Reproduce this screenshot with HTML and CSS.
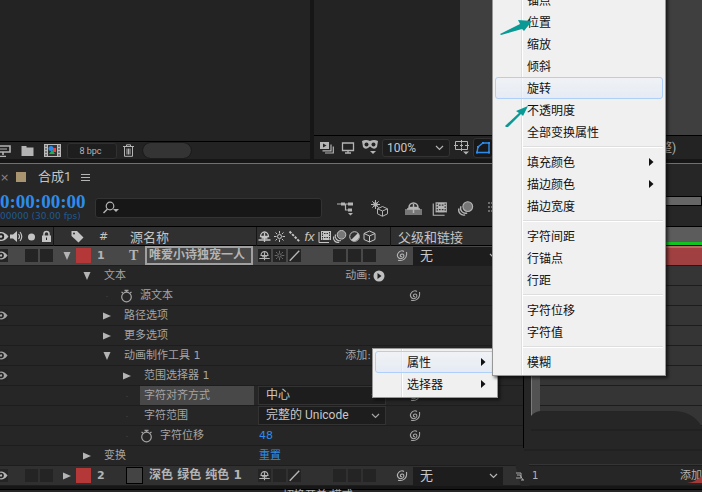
FILE: index.html
```html
<!DOCTYPE html>
<html lang="zh-CN">
	<head>
		<meta charset="UTF-8">
		<title>合成1</title>
		<link rel="stylesheet" href="styles.css">
	</head>
	<body>
		<!-- 图标 -->
		<svg class="defs" aria-hidden="true">
			<symbol id="eye" viewBox="0 0 15 15"><path d="M0 7.500Q3 3 7 3t7.500 4.500Q11 12 7 12T0 7.500Z" fill="currentColor"/><circle cx="7" cy="7.500" r="3.200" fill="#222"/><circle cx="7" cy="7.500" r="1.300" fill="currentColor"/></symbol>
			<symbol id="speaker" viewBox="0 0 15 15"><path d="M1 5.500h3l4-3.500v11L4 9.500H1z" fill="currentColor"/><path d="M9.500 5q2 2.500 0 5M11 3q3.500 4.500 0 9" fill="none" stroke="currentColor" stroke-width="1.200"/></symbol>
			<symbol id="dot" viewBox="0 0 15 15"><circle cx="7.500" cy="8" r="3.500" fill="currentColor"/></symbol>
			<symbol id="lock" viewBox="0 0 15 15"><path d="M3 6.500h9V13H3z" fill="currentColor"/><path d="M5 7V5a2.500 2.500 0 0 1 5 0v2" fill="none" stroke="currentColor" stroke-width="1.500"/><path d="M7 8.500h1v2.500h-1z" fill="#222"/></symbol>
			<symbol id="tag" viewBox="0 0 15 15"><path d="M1.500 2H7l6.500 6.500-5 5L1.500 7z" fill="currentColor"/><circle cx="4" cy="4.500" r="1" fill="#333"/></symbol>
			<symbol id="shy" viewBox="0 0 15 15"><path d="M3.500 7.500a4 4.500 0 0 1 8 0zM1.500 11h12M4.500 9h6M7.500 4v9" fill="none" stroke="currentColor" stroke-width="1.300"/></symbol>
			<symbol id="sun" viewBox="0 0 15 15"><circle cx="7.500" cy="7.500" r="2" fill="none" stroke="currentColor"/><path d="M7.500 2v2.500M7.500 10.500V13M2 7.500h2.500M10.500 7.500H13M3.500 3.500l1.700 1.700M9.800 9.800l1.700 1.700M11.500 3.500L9.800 5.200M5.200 9.800l-1.700 1.700" stroke="currentColor"/></symbol>
			<symbol id="dash" viewBox="0 0 15 15"><path d="M2.500 2.500l10 10" stroke="currentColor" stroke-width="2" stroke-dasharray="2.500 1.200"/></symbol>
			<symbol id="line" viewBox="0 0 15 15"><path d="M2 13.500L13 2" stroke="currentColor" stroke-width="1.600"/></symbol>
			<symbol id="film" viewBox="0 0 15 15"><path d="M4 2h10v9H4z" fill="currentColor"/><path d="M2 3v10.500H12" fill="none" stroke="currentColor"/><path d="M7 4.500h4M7 8.500h4M5.500 3v8M12.500 3v8" stroke="#333" stroke-dasharray="1.500 1"/></symbol>
			<symbol id="blur" viewBox="0 0 15 15"><circle cx="9.500" cy="5.800" r="4.300" fill="#777" stroke="currentColor"/><path d="M3.500 5.500a4.500 4.500 0 0 0 5.500 6M1.700 7.500a4.500 4.500 0 0 0 5.500 5.700" fill="none" stroke="currentColor" stroke-width="1.200"/></symbol>
			<symbol id="half" viewBox="0 0 15 15"><circle cx="7.500" cy="7.500" r="4.800" fill="none" stroke="currentColor"/><path d="M11 4a5 5 0 0 1-7 7z" fill="currentColor"/></symbol>
			<symbol id="cube" viewBox="0 0 15 15"><path d="M7.500 2l5.500 2.500v6L7.500 13 2 10.500v-6zM2 4.500L7.500 7 13 4.500M7.500 7v6" fill="none" stroke="currentColor"/></symbol>
			<symbol id="right" viewBox="0 0 12 12"><path d="M2 2.500L10 6l-8 3.500z" fill="currentColor"/></symbol>
			<symbol id="down" viewBox="0 0 12 12"><path d="M2.500 2h7L6 10z" fill="currentColor"/></symbol>
			<symbol id="none" viewBox="0 0 12 12"><path d="M5.500 6h1v1h-1z" fill="#444"/></symbol>
			<symbol id="watch" viewBox="0 0 13 14"><circle cx="6.500" cy="8" r="4.800" fill="none" stroke="currentColor" stroke-width="1.200"/><path d="M4.500 1.500h4M6.500 1.500V3M1.500 3l1.500 1M11.500 3L10 4" stroke="currentColor" stroke-width="1.300"/></symbol>
			<symbol id="spiral" viewBox="0 0 13 13"><path d="M7 7.500C5.500 8.500 4.500 6 6.300 5.200C9 4 10 8 7.300 9.300C4 10.800 1 7 3.200 4C4.800 1.700 7.500 1.500 9 2.500M3 11.200C8 12.700 12.500 9 11.500 3" fill="none" stroke="currentColor" stroke-width="1.100"/></symbol>
			<symbol id="chevron" viewBox="0 0 9 6"><path d="M1 1l3.500 3.500L8 1" fill="none" stroke="currentColor" stroke-width="1.200"/></symbol>
			<symbol id="play" viewBox="0 0 12 12"><circle cx="6" cy="6" r="5.500" fill="currentColor"/><path d="M4.500 3l4 3-4 3z" fill="#222"/></symbol>
			<symbol id="more" viewBox="0 0 5 8"><path d="M0 0l4.500 4L0 8z" fill="currentColor"/></symbol>
		</svg>

		<main class="app">
			<section class="panels">
				<div class="project">
					<div class="view"></div>
					<div class="bar">
						<svg class="interpret" viewBox="0 0 11 12"><path d="M0 1h10v6H0M0 11.500h6M3 7v3" fill="none" stroke="currentColor" stroke-width="1.600"/><path d="M0 4h7" stroke="currentColor"/></svg>
						<svg class="folder" viewBox="0 0 14 12"><path d="M1 1h5v1.500h7V11H1z" fill="currentColor"/></svg>
						<svg class="comp" viewBox="0 0 17 13"><path d="M0 0h17v13H0z" fill="#bbb"/><path d="M4 1h9v11H4z" fill="#333"/><path d="M2 1v12M15 1v12" stroke="#333" stroke-dasharray="2 1"/><circle cx="7" cy="4.500" r="2.500" fill="#2d8ceb"/><path d="M9 4h3v4H9z" fill="#f04040"/><path d="M5 10l3-4 3 4z" fill="#22b14c"/></svg>
						<button class="bpc" type="button">8 bpc</button>
						<svg class="trash" viewBox="0 0 11 13"><path d="M0 2.500h11M3.500 2V.8h4V2M1.500 3v9.300h8V3M4 4.500v6M5.500 4.500v6M7 4.500v6" fill="none" stroke="currentColor"/></svg>
						<span class="pill"></span>
					</div>
				</div>
				<div class="viewer">
					<div class="view"><div class="canvas"></div></div>
					<div class="bar">
						<svg class="w14" viewBox="0 0 14 12"><path d="M0 0h9v7H0z" fill="currentColor"/><path d="M3 1.500L6.500 3.500 3 5.500z" fill="#222"/><path d="M2.500 8.800h8.500V2.500M5 11h8.300V4.500" fill="none" stroke="currentColor" stroke-width="1.200"/></svg>
						<svg class="w14" viewBox="0 0 14 12"><path d="M1.500 1h11v7.500h-11zM4 11h6M7 9v2" fill="none" stroke="currentColor" stroke-width="1.300"/></svg>
						<svg class="mask" viewBox="0 0 16 15"><path d="M0 1q4-2 8 0 4-2 8 0l-1 6q-2 3-5 1L8 6.500 6 8Q3 10 1 7z" fill="currentColor"/><circle cx="4.500" cy="4.500" r="2" fill="#222"/><circle cx="11.500" cy="4.500" r="2" fill="#222"/><path d="M8 11h6l-3 3z" fill="currentColor"/></svg>
						<label class="pick zoom">
							<select aria-label="缩放"><option>100%</option></select>
							<svg class="chev"><use href="#chevron"/></svg>
						</label>
						<svg class="mask" viewBox="0 0 16 15"><path d="M1.500 1.500h12v8h-12zM7.500 0v3.500M7.500 7.500V11M0 5.500h4M11 5.500h4M6 5.500h3M7.500 4v3" fill="none" stroke="currentColor"/><path d="M9 11.500h6l-3 3z" fill="currentColor"/></svg>
						<span class="shape"><svg class="w14" viewBox="0 0 14 12"><path d="M1 10.500l1-5.500L7 1h6v9.500z" fill="none" stroke="#2d8ceb" stroke-width="1.400"/><path d="M0 9.500h2v2H0zM1 4h2v2H1zM6 0h2v2H6zM12 0h2v2h-2zM12 9.500h2v2h-2z" fill="#2d8ceb"/></svg></span>
						<span class="quality">(完整)</span>
					</div>
				</div>
			</section>

			<section class="timeline">
				<div class="layers">
					<div class="tabs">
						<button class="close" type="button" aria-label="关闭">×</button>
						<i class="swatch"></i>
						<span class="tab">合成1</span>
						<svg class="burger" viewBox="0 0 9 9"><path d="M0 1.500h9M0 4.500h9M0 7.500h9" stroke="currentColor"/></svg>
					</div>
					<div class="tools">
						<div class="time">
							<strong>0:00:00:00</strong>
							<small>00000 (30.00 fps)</small>
						</div>
						<label class="search">
							<svg viewBox="0 0 18 14"><circle cx="8" cy="5" r="3.800" fill="none" stroke="currentColor" stroke-width="1.200"/><path d="M5.500 8L1.500 12" stroke="currentColor" stroke-width="1.500"/><path d="M11 8h6l-3 3z" fill="currentColor"/></svg>
							<input type="text" aria-label="搜索">
						</label>
						<div class="toggles">
							<svg viewBox="0 0 17 17"><path d="M0 4h5M6 4h8M8.500 4v6h4" fill="none" stroke="currentColor" stroke-width="1.200"/><path d="M4 2.500h4v3H4zM11 2.500h5v3h-5zM11 8.500h4v3h-4zM11 13h5l-2.500 2.500z" fill="currentColor"/></svg>
							<svg viewBox="0 0 17 17"><path d="M4.500 0v9M0 4.500h9M1.300 1.300l6.400 6.400M7.700 1.300L1.300 7.700" stroke="currentColor"/><circle cx="4.500" cy="4.500" r="2.300" fill="currentColor"/><path d="M11.500 6.500l5 2.300v5l-5 2.500-5-2.500v-5zM6.500 8.800l5 2.200 5-2.200M11.500 11v5" fill="#232323" stroke="currentColor"/></svg>
							<svg viewBox="0 0 17 17"><path d="M0 9h17v6H0z" fill="#777"/><path d="M4 7.500a4.500 4.500 0 0 1 9 0zM2 9h13M8.500 4v9" fill="none" stroke="currentColor" stroke-width="1.500"/></svg>
							<svg viewBox="0 0 15 15"><use href="#film"/></svg>
							<svg viewBox="0 0 15 15"><use href="#blur"/></svg>
							<svg viewBox="0 0 17 17"><path d="M5 3h9M5 7h9M5 11h9" stroke="currentColor" stroke-dasharray="2 1"/></svg>
						</div>
					</div>
					<div class="row head">
						<div class="av"><svg><use href="#eye"/></svg><svg><use href="#speaker"/></svg><svg><use href="#dot"/></svg><svg><use href="#lock"/></svg></div>
						<div class="name"><svg class="tagicon"><use href="#tag"/></svg><b>#</b><span>源名称</span></div>
						<div class="sw"><svg><use href="#shy"/></svg><svg><use href="#sun"/></svg><svg><use href="#dash"/></svg><em>fx</em><svg><use href="#film"/></svg><svg><use href="#blur"/></svg><svg><use href="#half"/></svg><svg><use href="#cube"/></svg></div>
						<div class="parent">父级和链接</div>
					</div>
					<div class="row layer on">
						<div class="av"><i><svg><use href="#eye"/></svg></i><i class="off"></i><i></i><i></i></div>
						<div class="name"><svg class="tri"><use href="#down"/></svg><i class="color"></i><b>1</b><span class="type">T</span><span class="title">唯爱小诗独宠一人</span></div>
						<div class="sw"><i><svg><use href="#shy"/></svg></i><i><svg class="dim"><use href="#sun"/></svg></i><i><svg><use href="#line"/></svg></i><i class="off"></i><i class="off"></i><i></i><i></i><i></i></div>
						<div class="parent"><svg class="spiral"><use href="#spiral"/></svg><label class="pick"><select aria-label="父级"><option>无</option></select><svg class="chev"><use href="#chevron"/></svg></label></div>
					</div>
					<div class="row prop">
						<div class="av"></div>
						<div class="name l1"><svg class="twirl"><use href="#down"/></svg><span>文本</span></div>
						<div class="sw add">动画:<svg><use href="#play"/></svg></div>
					</div>
					<div class="row prop">
						<div class="av"></div>
						<div class="name l2"><svg class="twirl"><use href="#none"/></svg><svg class="watch"><use href="#watch"/></svg><span>源文本</span></div>
						<div class="sw"></div>
						<div class="parent"><svg class="spiral"><use href="#spiral"/></svg></div>
					</div>
					<div class="row prop">
						<div class="av"><i><svg><use href="#eye"/></svg></i></div>
						<div class="name l2"><svg class="twirl"><use href="#right"/></svg><span>路径选项</span></div>
					</div>
					<div class="row prop">
						<div class="av"></div>
						<div class="name l2"><svg class="twirl"><use href="#right"/></svg><span>更多选项</span></div>
					</div>
					<div class="row prop">
						<div class="av"><i><svg><use href="#eye"/></svg></i></div>
						<div class="name l2"><svg class="twirl"><use href="#down"/></svg><span>动画制作工具 1</span></div>
						<div class="sw add">添加:<svg><use href="#play"/></svg></div>
					</div>
					<div class="row prop">
						<div class="av"><i><svg><use href="#eye"/></svg></i></div>
						<div class="name l3"><svg class="twirl"><use href="#right"/></svg><span>范围选择器 1</span></div>
					</div>
					<div class="row prop">
						<div class="av"></div>
						<div class="name l3"><svg class="twirl"><use href="#none"/></svg><label class="picked" for="align">字符对齐方式</label></div>
						<div class="sw"><span class="pick wide"><select id="align"><option>中心</option></select><svg class="chev"><use href="#chevron"/></svg></span></div>
						<div class="parent"><svg class="spiral"><use href="#spiral"/></svg></div>
					</div>
					<div class="row prop">
						<div class="av"></div>
						<div class="name l3"><svg class="twirl"><use href="#none"/></svg><label for="range">字符范围</label></div>
						<div class="sw"><span class="pick wide"><select id="range"><option>完整的 Unicode</option></select><svg class="chev"><use href="#chevron"/></svg></span></div>
						<div class="parent"><svg class="spiral"><use href="#spiral"/></svg></div>
					</div>
					<div class="row prop">
						<div class="av"></div>
						<div class="name l3"><svg class="twirl"><use href="#none"/></svg><svg class="watch"><use href="#watch"/></svg><span>字符位移</span></div>
						<div class="sw"><a href="#">48</a></div>
						<div class="parent"><svg class="spiral"><use href="#spiral"/></svg></div>
					</div>
					<div class="row prop">
						<div class="av"></div>
						<div class="name l1"><svg class="twirl"><use href="#right"/></svg><span>变换</span></div>
						<div class="sw"><a href="#">重置</a></div>
					</div>
					<div class="row layer">
						<div class="av"><i><svg><use href="#eye"/></svg></i><i class="off"></i><i></i><i></i></div>
						<div class="name"><svg class="tri"><use href="#right"/></svg><i class="color"></i><b>2</b><i class="solid"></i><span class="title">深色 绿色 纯色 1</span></div>
						<div class="sw"><i><svg><use href="#shy"/></svg></i><i></i><i><svg><use href="#line"/></svg></i><i class="off"></i><i class="off"></i><i></i><i></i><i></i></div>
						<div class="parent"><svg class="spiral"><use href="#spiral"/></svg><label class="pick"><select aria-label="父级"><option>无</option></select><svg class="chev"><use href="#chevron"/></svg></label></div>
					</div>
				</div>

				<div class="graph">
					<div class="navigator"></div>
					<div class="ruler"></div>
					<div class="cache"></div>
					<div class="clip"></div>
					<div class="lane"></div>
					<div class="lane"></div>
					<div class="lane"></div>
					<div class="lane"></div>
					<div class="lane"></div>
					<div class="lane"></div>
					<div class="lane"></div>
					<div class="lane"></div>
					<div class="lane"></div>
					<div class="lane"></div>
					<div class="lane last"><span>1</span><span class="push">添加</span></div>
					<svg class="playhead" viewBox="0 0 188 120" aria-hidden="true">
						<path d="M9 0h7v82H9z" fill="#262626"/>
						<path d="M16 0h9v50h-9z" fill="#525252"/>
						<path d="M13 9h7M16.500 4v5" stroke="#aaa"/>
						<path d="M16 0h1v52h-1z" fill="#2d8ceb"/>
						<path d="M16 82V50q4-5 11-5H158q20 0 29 16h1V98H8V82z" fill="#262626"/>
						<path d="M16 64h172M9 84h179" stroke="#1d1d1d"/>
						<path d="M0 98h14v22H6z" fill="#262626"/>
						<path d="M1 107h5v5H1M5 109l3 5M6 114h3M2 109h3" fill="none" stroke="#aaa"/>
						<path d="M172 117q10-1 16-9v9z" fill="#a33a3a"/>
					</svg>
				</div>
			</section>
			<footer class="foot">切换开关/模式</footer>
		</main>

		<nav class="menu small">
			<button class="hot" type="button">属性<svg><use href="#more"/></svg></button>
			<button type="button">选择器<svg><use href="#more"/></svg></button>
		</nav>
		<nav class="menu big">
			<button type="button">锚点</button>
			<button type="button">位置</button>
			<button type="button">缩放</button>
			<button type="button">倾斜</button>
			<button class="hot" type="button">旋转</button>
			<button type="button">不透明度</button>
			<button type="button">全部变换属性</button>
			<hr>
			<button type="button">填充颜色<svg><use href="#more"/></svg></button>
			<button type="button">描边颜色<svg><use href="#more"/></svg></button>
			<button type="button">描边宽度</button>
			<hr>
			<button type="button">字符间距</button>
			<button type="button">行锚点</button>
			<button type="button">行距</button>
			<hr>
			<button type="button">字符位移</button>
			<button type="button">字符值</button>
			<hr>
			<button type="button">模糊</button>
		</nav>
		<svg class="arrows" viewBox="0 0 36 112" aria-hidden="true">
			<path d="M1 19L21 9l-2-4 14 1-8 10-2-2L2 20z" fill="#0a9a96"/>
			<path d="M6 111L20 98l-3-2 12-5-5 10-2-2L8 113z" fill="#0a9a96"/>
		</svg>
	</body>
</html>
```
FILE: styles.css
```css
*{
	box-sizing: border-box;
}
body{
	margin: 0;
	height: 100vh;
	overflow: hidden;
	position: relative;
	background: #161616;
	color: #b4b4b4;
	font: 11px/19px "DejaVu Sans","Noto Sans CJK SC",sans-serif;
}
svg{
	display: block;
	flex: none;
}
button,select,input{
	margin: 0;
	padding: 0;
	border: 0;
	background: none;
	color: inherit;
	font: inherit;
}
a{
	color: #2d8ceb;
	text-decoration: none;
}
.defs{
	position: absolute;
	width: 0;
	height: 0;
}
.app{
	display: flex;
	flex-direction: column;
}

/* 上方面板 */
.panels{
	display: grid;
	grid-template-columns: 310px 1fr;
	gap: 4px;
	height: 159px;
}
.project,.viewer{
	display: flex;
	flex-direction: column;
	background: #232323;
}
.view{
	flex: 1;
	display: flex;
	border-bottom: 1px solid #000;
}
.canvas{
	flex: 1;
	margin-left: 146px;
	background: #3f3f3f;
}
.bar{
	display: flex;
	align-items: center;
}
.project .bar{
	height: 17px;
}
.viewer .bar{
	height: 23px;
	padding-left: 6px;
	gap: 7px;
}
.interpret{
	width: 11px;
	height: 12px;
	margin-right: 9px;
}
.folder{
	width: 15px;
	height: 12px;
	margin-right: 9px;
}
.comp{
	width: 17px;
	height: 13px;
	margin-right: 6px;
}
.bpc{
	width: 50px;
	height: 16px;
	margin-right: 6px;
	padding-right: 3px;
	border: 1px solid #303030;
	border-radius: 3px;
	background: #1e1e1e;
	font: 9px/14px Roboto,sans-serif;
}
.trash{
	width: 11px;
	height: 13px;
	margin-right: 9px;
}
.pill{
	width: 48px;
	height: 15px;
	border-radius: 8px;
	background: #343434;
	outline: 1px solid #1c1c1c;
}
.w14{
	width: 14px;
	height: 12px;
}
.mask{
	width: 16px;
	height: 15px;
}
.pick{
	display: grid;
	align-items: center;
	width: 90px;
	height: 18px;
	background: #1d1d1d;
}
.pick select,.pick svg{
	grid-area: 1 / 1;
}
.pick select{
	appearance: none;
	width: 100%;
	height: 100%;
	padding-left: 7px;
	font: 13px/18px Roboto,"Noto Sans CJK SC",sans-serif;
	color: #c8c8c8;
}
.chev{
	justify-self: end;
	width: 9px;
	height: 6px;
	margin-right: 5px;
	pointer-events: none;
}
.zoom{
	width: 68px;
	margin: 0 -3px;
	border: 1px solid #333;
	border-radius: 3px;
}
.zoom select{
	padding-left: 4px;
	font-size: 12px;
	line-height: 16px;
}
.shape{
	padding: 3px 2px;
	margin-left: -4px;
	border: 1px solid #333;
	border-radius: 3px;
	background: #181818;
}
.quality{
	margin-left: 144px;
	font: 12px/18px Roboto,"Noto Sans CJK SC",sans-serif;
}

/* 时间轴 */
.timeline{
	display: grid;
	grid-template-columns: 523px 1fr;
	margin-top: 4px;
	border-top: 1px solid #2d7fd3;
	background: #262626;
	overflow: hidden;
}
.layers{
	min-width: 0;
}
.tabs{
	display: flex;
	align-items: center;
	height: 26px;
}
.close{
	width: 16px;
	text-align: left;
	color: #888;
}
.swatch{
	width: 10px;
	height: 10px;
	background: #a8956f;
}
.tab{
	margin: 0 10px 0 12px;
	font: 13px/20px Roboto,"Noto Sans CJK SC",sans-serif;
	color: #c4c4c4;
}
.burger{
	width: 9px;
	height: 9px;
}
.tools{
	display: flex;
	align-items: center;
	height: 36px;
}
.time{
	width: 95px;
	color: #2d8ceb;
}
.time strong{
	display: block;
	font: bold 19px/16px "Liberation Serif",serif;
}
.time small{
	display: block;
	font-size: 9px;
	line-height: 12px;
	color: #1f5a94;
}
.search{
	display: flex;
	align-items: center;
	width: 227px;
	height: 20px;
	padding-left: 6px;
	border: 1px solid #333;
	border-radius: 3px;
	background: #171717;
}
.search svg{
	width: 18px;
	height: 14px;
}
.search input{
	flex: 1;
	min-width: 0;
	outline: 0;
}
.toggles{
	display: flex;
	gap: 9px;
	margin-left: 15px;
}
.toggles svg{
	width: 17px;
	height: 17px;
}
.toggles svg:nth-child(-n+2){
	margin-right: 8px;
}
.row{
	display: grid;
	grid-template-columns: 54px 203px 134px 1fr;
	align-items: center;
	height: 20px;
	border-bottom: 1px solid #1d1d1d;
}
.row>div{
	display: flex;
	align-items: center;
	height: 19px;
	min-width: 0;
}
.row .av{
	margin-left: -6px;
}
.row .av svg,.row .sw svg{
	width: 15px;
	height: 15px;
}
.row i{
	flex: none;
}
.row .av>i,.row .sw>i{
	width: 13px;
	height: 13px;
	margin: 0 1px;
	background: #242424;
}
.row .av i svg,.row .sw i svg{
	width: 13px;
	height: 13px;
}
.row i.off{
	visibility: hidden;
}
.head{
	background: #303030;
	border-top: 1px solid #000;
	border-bottom: 1px solid #000;
	font: 13px/16px "Noto Sans CJK SC",sans-serif;
	color: #c4c4c4;
}
.head>div{
	border-right: 1px solid #151515;
}
.head .name{
	padding-left: 16px;
}
.tagicon{
	width: 15px;
	height: 15px;
}
.head b{
	width: 45px;
	padding-right: 8px;
	text-align: center;
	font: 11px/18px "DejaVu Sans",sans-serif;
}
.head em{
	width: 15px;
	text-align: center;
	font: italic 13px/15px "Liberation Sans",sans-serif;
}
.head .parent{
	padding-left: 7px;
}
.layer{
	background: #303030;
}
.layer.on{
	background: #484848;
}
.layer .name{
	padding-left: 7px;
}
.layer b{
	width: 35px;
	padding-left: 6px;
}
.layer .color{
	width: 15px;
	height: 15px;
	background: #b43838;
}
.tri{
	width: 12px;
	height: 12px;
	margin-right: 3px;
}
.type{
	width: 19px;
	padding-left: 3px;
	font: bold 14px/18px "Liberation Serif",serif;
}
.solid{
	width: 17px;
	height: 17px;
	margin-right: 4px;
	border: 1px solid #000;
	background: #444;
}
.title{
	padding: 0 2px;
	font-weight: bold;
	font-size: 12px;
	line-height: 15px;
	white-space: nowrap;
}
.on .title{
	width: 108px;
	border: 2px solid #a0a0a0;
}
.dim{
	color: #777;
}
.spiral{
	width: 13px;
	height: 13px;
}
.layer .parent{
	padding-left: 4px;
	gap: 5px;
}
.prop{
	color: #a4a4a4;
}
.prop .parent{
	padding-left: 17px;
}
.l1{
	padding-left: 27px;
}
.l2{
	padding-left: 47px;
}
.l3{
	padding-left: 67px;
}
.twirl{
	width: 12px;
	height: 12px;
	margin-right: 7px;
	color: #b4b4b4;
}
.watch{
	width: 13px;
	height: 14px;
	margin-right: 3px;
}
.prop .name span,.prop .name label{
	padding-left: 4px;
	white-space: nowrap;
}
.prop .name .picked{
	flex: 1;
	margin-right: 3px;
	background: #484848;
}
.prop .add{
	justify-content: end;
	padding-right: 6px;
	gap: 2px;
}
.row .add svg{
	width: 12px;
	height: 12px;
	color: #c0c0c0;
}
.wide{
	width: 128px;
	height: 19px;
	margin-left: 1px;
	border: 1px solid #333;
}
.wide select{
	font-size: 12px;
	line-height: 17px;
}
.row .sw .chev,.row .parent .chev{
	width: 9px;
	height: 6px;
}
.prop .sw a{
	padding-left: 2px;
}

/* 右侧轨道 */
.graph{
	display: flex;
	flex-direction: column;
	position: relative;
	min-width: 0;
	padding-top: 32px;
	border-left: 1px solid #000;
}
.navigator{
	height: 10px;
	border: 1px solid #000;
	background: #666;
}
.ruler{
	height: 16px;
	margin-top: 20px;
	border-top: 1px solid #000;
	background: #5c5c5c;
}
.cache{
	height: 4px;
	border-bottom: 1px solid #000;
	background: #0fc41e;
}
.clip{
	height: 20px;
	border-top: 2px solid #b86868;
	border-bottom: 1px solid #1d1d1d;
	background: #a04040;
}
.lane{
	height: 20px;
	border-bottom: 1px solid #1d1d1d;
	background: #353535;
}
.lane.last{
	display: flex;
	align-items: center;
	padding-left: 8px;
	background: #262626;
}
.last span:not(.push){
	font-size: 10px;
}
.push{
	margin-left: auto;
}
.playhead{
	position: absolute;
	left: -9px;
	bottom: 0;
	width: 188px;
	height: 120px;
}
.foot{
	height: 20px;
	margin-top: 3px;
	padding-left: 283px;
	border-top: 1px solid #000;
	background: #262626;
	line-height: 12px;
}

/* 菜单 */
.menu{
	position: absolute;
	padding: 2px;
	border: 1px solid #979797;
	background: linear-gradient(to right,#f0f0f0 28px,#dedede 28px,#dedede 29px,#fff 29px,#fff 30px,#f0f0f0 30px);
	box-shadow: 2px 2px 3px rgba(0,0,0,.6);
	font: 12px/20px "Noto Sans CJK SC",sans-serif;
	color: #111;
}
.menu button{
	display: flex;
	align-items: center;
	justify-content: space-between;
	width: 100%;
	height: 22px;
	padding: 0 8px 0 31px;
	border: 1px solid transparent;
	border-radius: 3px;
}
.menu svg{
	width: 5px;
	height: 8px;
}
.menu .hot{
	border-color: #aecff7;
	background: linear-gradient(rgba(240,243,248,.6),rgba(222,232,248,.6));
}
.menu hr{
	height: 2px;
	margin: 3px 0 3px 28px;
	border: 0;
	border-top: 1px solid #dedede;
	background: #fff;
}
.small{
	left: 372px;
	top: 348px;
	width: 126px;
}
.big{
	left: 492px;
	top: -14px;
	width: 174px;
}
.arrows{
	position: absolute;
	left: 499px;
	top: 15px;
	width: 36px;
	height: 112px;
}
```
